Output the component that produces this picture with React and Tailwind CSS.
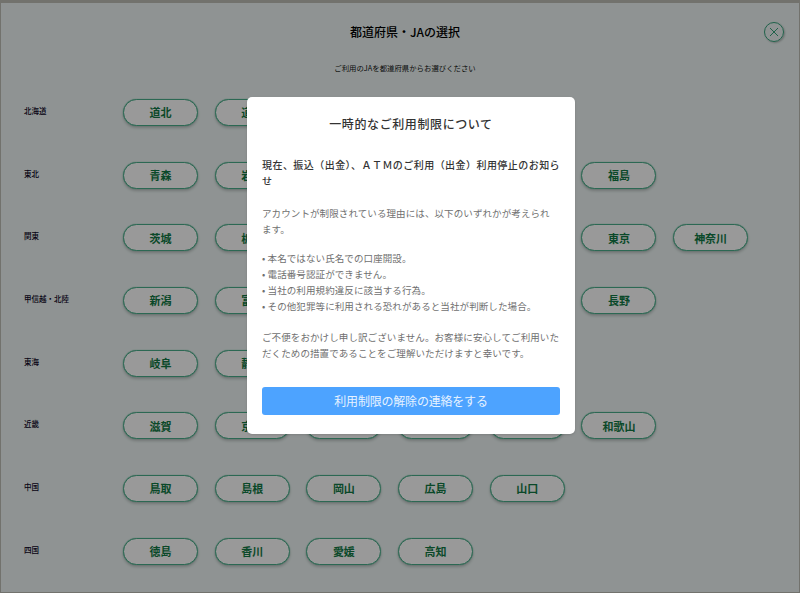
import React from 'react';

const regions = [
  { name: '北海道', items: ['道北', '道央', '道南', '道東'] },
  { name: '東北', items: ['青森', '岩手', '宮城', '秋田', '山形', '福島'] },
  { name: '関東', items: ['茨城', '栃木', '群馬', '埼玉', '千葉', '東京', '神奈川'] },
  { name: '甲信越・北陸', items: ['新潟', '富山', '石川', '福井', '山梨', '長野'] },
  { name: '東海', items: ['岐阜', '静岡', '愛知', '三重'] },
  { name: '近畿', items: ['滋賀', '京都', '大阪', '兵庫', '奈良', '和歌山'] },
  { name: '中国', items: ['鳥取', '島根', '岡山', '広島', '山口'] },
  { name: '四国', items: ['徳島', '香川', '愛媛', '高知'] },
];

const font = "font-['Noto_Sans_CJK_JP','Noto_Sans',sans-serif]";

const App = () => {
  return (
    <div className={`relative w-[800px] h-[593px] overflow-hidden bg-[#eef6f5] ${font}`}>
      <div className="relative flex flex-col h-full">
        <div className="flex justify-center pt-[23px] pl-[10px] h-[60px]">
          <h1 className="text-[12px] leading-[18px] font-medium text-black">都道府県・JAの選択</h1>
        </div>
        <p className="pl-[10px] text-center text-[7.4px] leading-[12px] text-[#111] h-[37px] mt-[2px]">
          ご利用のJAを都道府県からお選びください
        </p>
        <div className="flex flex-col gap-[35.7px] pl-[24px]">
          {regions.map((region) => (
            <div key={region.name} className="flex">
              <div className="w-[99px] shrink-0 pt-[6px] text-[7.5px] leading-[12px] font-medium text-[#0c0424]">{region.name}</div>
              <div className="flex gap-[16.7px]">
                {region.items.map((item) => (
                  <button
                    key={item}
                    className="w-[75px] h-[27px] rounded-full border border-[#4aae8a] bg-white text-[11px] font-bold text-[#117a45] shadow-[0_0_1px_#4aae8a,0_2px_3px_rgba(0,0,0,0.2)]"
                  >
                    {item}
                  </button>
                ))}
              </div>
            </div>
          ))}
        </div>
        <button className="absolute left-[764px] top-[22px] w-[20px] h-[20px] rounded-full border border-[#36a37c] flex items-center justify-center shadow-[1px_1px_2px_rgba(0,0,0,0.25)]">
          <svg width="10" height="10" viewBox="0 0 10 10" fill="none" stroke="#36a37c" strokeWidth="1">
            <path d="M1 1L9 9M9 1L1 9" />
          </svg>
        </button>
      </div>

      {/* overlay */}
      <div className="absolute inset-0 bg-black/40 border-t-[3px] border-l border-r border-b border-[#72726d]" />

      {/* modal */}
      <div className="absolute left-[247px] top-[97px] w-[328px] h-[337px] rounded-[5px] bg-white px-[15px] pt-[18px] shadow-sm">
        <h2 className="text-center text-[12px] leading-[18px] font-medium tracking-[0.6px] text-[#333]">一時的なご利用制限について</h2>
        <h3 className="mt-[24px] text-[10px] leading-[16px] font-medium tracking-[0.45px] text-[#333] whitespace-nowrap">
          現在、振込（出金）、ＡＴＭのご利用（出金）利用停止のお知ら<br />せ
        </h3>
        <div className="mt-[16px] text-[9.5px] leading-[16px] tracking-[0.1px] text-[#6f6f6f]">
          <p>アカウントが制限されている理由には、以下のいずれかが考えられ<br />ます。</p>
          <p className="mt-[13px]">• 本名ではない氏名での口座開設。</p>
          <p>• 電話番号認証ができません。</p>
          <p>• 当社の利用規約違反に該当する行為。</p>
          <p>• その他犯罪等に利用される恐れがあると当社が判断した場合。</p>
          <p className="mt-[15px]">ご不便をおかけし申し訳ございません。お客様に安心してご利用いただくための措置であることをご理解いただけますと幸いです。</p>
        </div>
        <button className="mt-[26px] w-full h-[28px] rounded-[3px] bg-[#4da3ff] text-[12px] tracking-[-0.2px] text-[#e6f2ff]">
          利用制限の解除の連絡をする
        </button>
      </div>
    </div>
  );
};

export default App;
